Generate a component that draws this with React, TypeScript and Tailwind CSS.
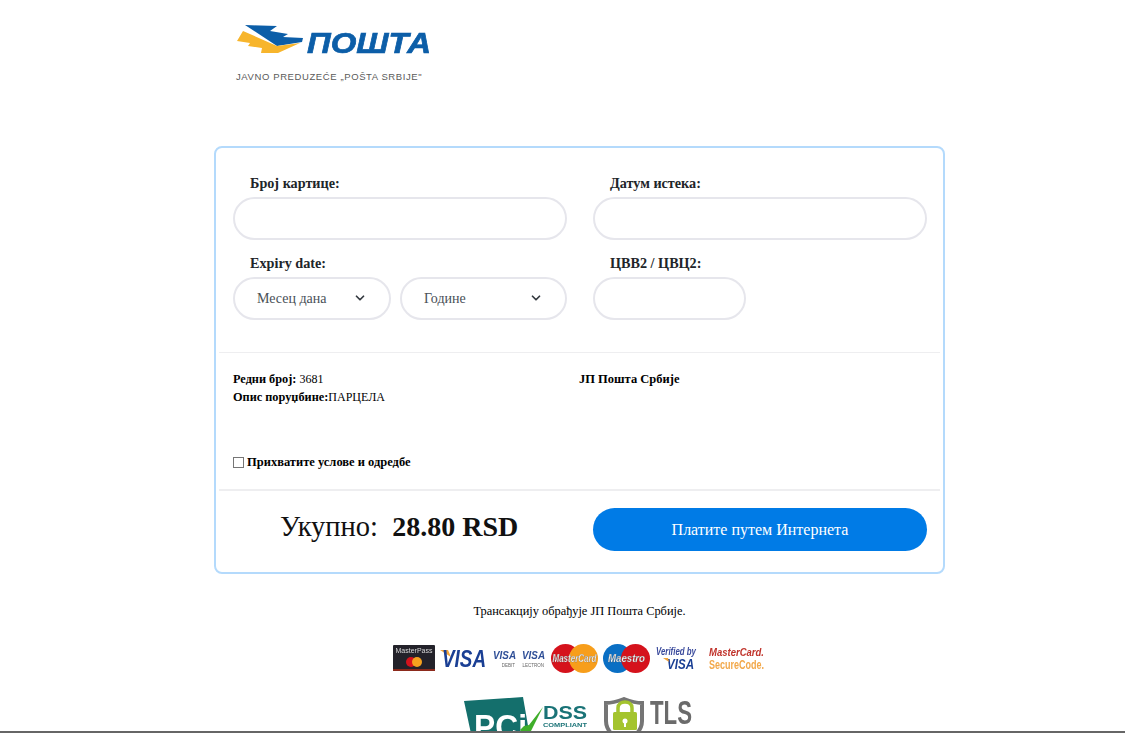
import { ChevronDown } from "lucide-react";

const inputClass = "w-full h-[43px] rounded-full border-2 border-[#e6e6ec] bg-white outline-none";
const sans = "'Liberation Sans', sans-serif";

function Label({ children }: { children: string }) {
    return <label className="block h-[19px] pl-[17px] mb-[4px] text-[14.2px] leading-[19px] font-bold text-[#212529]">{children}</label>;
}

function Dropdown({ label }: { label: string }) {
    return (
        <div className="relative w-full">
            <select className={inputClass + " appearance-none pl-[22px] text-[14px] text-[#495057]"} defaultValue={label}>
                <option>{label}</option>
            </select>
            <ChevronDown size={14} strokeWidth={3} className="absolute right-[24px] top-[14px] text-[#343a40]" />
        </div>
    );
}

function PoshtaLogo() {
    return (
        <svg width="205" height="40" viewBox="0 0 205 40" className="block blur-[0.4px]">
            <path d="M15 5 L47 6 L40 11 L58 14 L53 17 L73 18 L72 22 L47 26 Z" fill="#0c5ea8" />
            <path d="M13 11 L7 21 L20 23 L18 26 L32 28 L31 33 L48 33 L70 23 L47 26 Z" fill="#f7b52c" />
            <text x="77" y="33" fontFamily={sans} fontWeight="700" fontStyle="italic" fontSize="29" textLength="124" lengthAdjust="spacingAndGlyphs" fill="#0c5ea8" stroke="#0c5ea8" strokeWidth="0.7">ПОШТА</text>
        </svg>
    );
}

function MasterPass() {
    return (
        <svg width="42" height="29" viewBox="0 0 42 29">
            <rect y="1" width="42" height="26" rx="1" fill="#23222a" />
            <rect y="25" width="42" height="2" fill="#8c2a1c" />
            <text x="21" y="9" textAnchor="middle" fontFamily={sans} fontSize="7" fill="#d8d8d8">MasterPass</text>
            <circle cx="18" cy="18" r="5" fill="#d5121c" />
            <circle cx="24" cy="18" r="5" fill="#f5a11e" />
        </svg>
    );
}

function VisaMain() {
    return (
        <svg width="48" height="29" viewBox="0 0 48 29">
            <path d="M0 6 L8 6 L11 13 Z" fill="#f2a33a" />
            <text x="2" y="23" fontFamily={sans} fontWeight="700" fontStyle="italic" fontSize="23" textLength="44" lengthAdjust="spacingAndGlyphs" fill="#1a3f94">VISA</text>
        </svg>
    );
}

function VisaSmall({ sub }: { sub: string }) {
    return (
        <svg width="24" height="29" viewBox="0 0 24 29">
            <text x="0" y="15" fontFamily={sans} fontWeight="700" fontStyle="italic" fontSize="11" textLength="23" lengthAdjust="spacingAndGlyphs" fill="#2f4f97">VISA</text>
            <text x="22" y="23" textAnchor="end" fontFamily={sans} fontSize="4.5" fill="#666">{sub}</text>
        </svg>
    );
}

function Circles({ label, left, right, length }: { label: string; left: string; right: string; length: number }) {
    return (
        <svg width="47" height="29" viewBox="0 0 47 29">
            <circle cx="14.5" cy="14.5" r="14.5" fill={left} />
            <circle cx="32.5" cy="14.5" r="14.5" fill={right} />
            <text x="23.5" y="18" textAnchor="middle" fontFamily={sans} fontWeight="700" fontStyle="italic" fontSize="10" textLength={length} lengthAdjust="spacingAndGlyphs" fill="#f4f4f4" stroke="#666" strokeWidth="0.25">{label}</text>
        </svg>
    );
}

function VerifiedVisa() {
    return (
        <svg width="42" height="29" viewBox="0 0 42 29">
            <text x="0" y="11" fontFamily={sans} fontWeight="700" fontStyle="italic" fontSize="10" textLength="40" lengthAdjust="spacingAndGlyphs" fill="#3a4a9c">Verified by</text>
            <text x="11" y="25" fontFamily={sans} fontWeight="700" fontStyle="italic" fontSize="14" textLength="27" lengthAdjust="spacingAndGlyphs" fill="#1a3f94">VISA</text>
            <path d="M7 14 L12 14 L13 18 Z" fill="#f2a33a" />
        </svg>
    );
}

function SecureCode() {
    return (
        <svg width="56" height="29" viewBox="0 0 56 29">
            <text x="0" y="12" fontFamily={sans} fontWeight="700" fontStyle="italic" fontSize="11.5" textLength="55" lengthAdjust="spacingAndGlyphs" fill="#c0332b">MasterCard.</text>
            <text x="0" y="25" fontFamily={sans} fontWeight="700" fontSize="12" textLength="55" lengthAdjust="spacingAndGlyphs" fill="#f2a84a">SecureCode.</text>
        </svg>
    );
}

function PciBadge() {
    return (
        <svg width="124" height="46" viewBox="0 0 124 46" className="block blur-[0.4px]">
            <path d="M0 4 L59 0 L67 46 L9 46 Z" fill="#146f6c" />
            <text x="10" y="41" fontFamily={sans} fontWeight="700" fontSize="34" textLength="53" lengthAdjust="spacingAndGlyphs" fill="#ffffff">PCi</text>
            <path d="M56 33 L63 42 L79 10 L65 28 L60 29 Z" fill="#3fae2a" />
            <text x="79" y="22" fontFamily={sans} fontWeight="700" fontSize="19" textLength="44" lengthAdjust="spacingAndGlyphs" fill="#1a7377">DSS</text>
            <text x="79" y="29.5" fontFamily={sans} fontWeight="700" fontSize="6" textLength="44" lengthAdjust="spacingAndGlyphs" fill="#1a7377">COMPLIANT</text>
        </svg>
    );
}

function TlsBadge() {
    return (
        <svg width="90" height="46" viewBox="0 0 90 46" className="block blur-[0.4px]">
            <path d="M20 2 C28 5 33 6 38 6 L38 24 C38 34 30 40 20 46 C10 40 2 34 2 24 L2 6 C7 6 12 5 20 2 Z" fill="#fff" stroke="#757575" strokeWidth="4" />
            <path d="M14 15 L14 11 C14 3 28 3 28 11 L28 15" fill="none" stroke="#a4c42e" strokeWidth="3.5" />
            <rect x="9" y="15" width="24" height="18" rx="1.5" fill="#a4c42e" />
            <circle cx="21" cy="24" r="2.5" fill="#fff" />
            <rect x="20" y="25" width="2" height="5" fill="#fff" />
            <text x="46" y="27" fontFamily={sans} fontWeight="700" fontSize="33" textLength="42" lengthAdjust="spacingAndGlyphs" fill="#6b6b6b">TLS</text>
            <text x="46" y="40" fontFamily={sans} fontWeight="700" fontSize="9.5" textLength="42" lengthAdjust="spacingAndGlyphs" fill="#6b6b6b">SECURE</text>
        </svg>
    );
}

export default function App() {
    return (
        <div className="relative h-[733px] overflow-hidden bg-white font-['Liberation_Serif',serif] text-black">
            <header className="h-[146px] pl-[230px] pt-[20px]">
                <PoshtaLogo />
                <p className="mt-[10px] pl-[6px] font-['Liberation_Sans',sans-serif] text-[9.5px] leading-[14px] tracking-[0.6px] text-[#5a5a5a]">JAVNO PREDUZEĆE „POŠTA SRBIJE"</p>
            </header>

            <main className="ml-[214px] w-[731px]">
                <form className="h-[428px] rounded-[8px] border-2 border-[#b4dafc] px-[3px]">
                    <div className="grid grid-cols-[334px_334px] gap-x-[26px] gap-y-[14px] px-[14px] pt-[26px] pb-[32px] border-b border-[#eeeef0]">
                        <div>
                            <Label>Број картице:</Label>
                            <input className={inputClass} />
                        </div>
                        <div>
                            <Label>Датум истека:</Label>
                            <input className={inputClass} />
                        </div>
                        <div>
                            <Label>Expiry date:</Label>
                            <div className="grid grid-cols-[158px_167px] gap-x-[9px]">
                                <Dropdown label="Месец дана" />
                                <Dropdown label="Године" />
                            </div>
                        </div>
                        <div>
                            <Label>ЦВВ2 / ЦВЦ2:</Label>
                            <input className={inputClass + " !w-[153px]"} />
                        </div>
                    </div>

                    <div className="h-[138px] px-[14px] pt-[17px] border-b-2 border-[#eeeef0] text-[12.3px] leading-[18px]">
                        <div className="grid grid-cols-[346px_1fr]">
                            <div>
                                <p><b>Редни број:</b> <span className="text-[12px]">3681</span></p>
                                <p><b>Опис поруџбине:</b><span className="text-[12px]">ПАРЦЕЛА</span></p>
                            </div>
                            <p className="font-bold text-[12.5px]">ЈП Пошта Србије</p>
                        </div>
                        <label className="mt-[47px] flex items-center gap-[3px] font-bold text-[12.5px]">
                            <input type="checkbox" className="m-0 w-[11px] h-[11px] appearance-none border border-[#767676] bg-white" />
                            Прихватите услове и одредбе
                        </label>
                    </div>

                    <div className="grid grid-cols-[334px_334px] gap-x-[26px] px-[14px] pt-[17px]">
                        <p className="pl-[47px] text-[28.5px] leading-[36px] pt-[1px] text-[#111]">Укупно: <b className="ml-[7px] text-[28px]">28.80 RSD</b></p>
                        <button type="button" className="h-[43px] rounded-full bg-[#007be6] text-[16px] text-white">Платите путем Интернета</button>
                    </div>
                </form>

                <p className="mt-[29px] text-center text-[12.4px] leading-[16px]">Трансакцију обрађује ЈП Пошта Србије.</p>

                <div className="mt-[25px] pl-[179px] flex items-center gap-[5px] blur-[0.4px]">
                    <MasterPass />
                    <VisaMain />
                    <VisaSmall sub="DEBIT" />
                    <VisaSmall sub="ELECTRON" />
                    <Circles label="MasterCard" left="#d5121c" right="#f79e1b" length={44} />
                    <Circles label="Maestro" left="#0a6fc4" right="#d5121c" length={37} />
                    <div className="ml-[1px] mr-[6px]">
                        <VerifiedVisa />
                    </div>
                    <SecureCode />
                </div>

                <div className="mt-[24px] ml-[250px] flex gap-[16px]">
                    <PciBadge />
                    <TlsBadge />
                </div>
            </main>

            <div className="absolute inset-x-0 bottom-0 h-[2px] bg-[#666]" />
        </div>
    );
}
